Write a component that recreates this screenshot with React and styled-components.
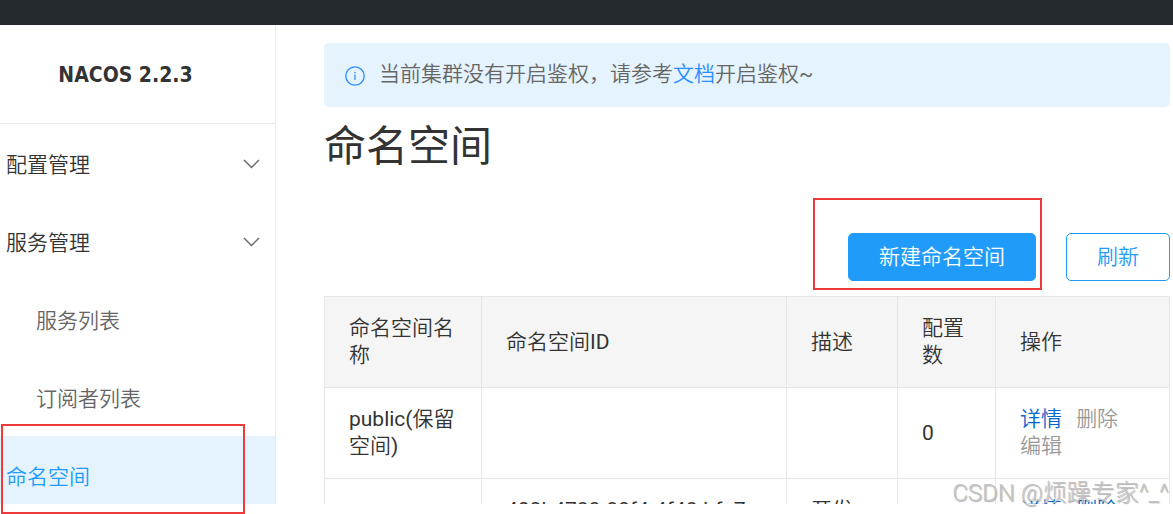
import React from "react";
import styled, { createGlobalStyle } from "styled-components";

const GlobalStyle = createGlobalStyle`
  * {
    box-sizing: border-box;
  }
  body {
    margin: 0;
    background: #fff;
    color: #333;
    font-family: Roboto, "Noto Sans CJK SC", sans-serif;
    font-size: 21px;
    font-weight: 350;
    line-height: 27px;
  }
`;

const Page = styled.div`
  position: relative;
  height: 100vh;
  padding-bottom: 10px;
  display: flex;
  flex-direction: column;
  overflow: hidden;
`;

const TopBar = styled.header`
  flex: none;
  height: 25px;
  background: #252a2f;
`;

const Body = styled.div`
  flex: 1;
  min-height: 0;
  display: flex;
  overflow: hidden;
`;

const Sidebar = styled.nav`
  flex: none;
  width: 276px;
  border-right: 1px solid #ebebeb;
`;

const Brand = styled.h1`
  margin: 0;
  padding: 36px 24px 34px 0;
  border-bottom: 1px solid #ebebeb;
  font-family: "DejaVu Sans Condensed", "DejaVu Sans", sans-serif;
  font-size: 21px;
  font-weight: 700;
  line-height: 28px;
  text-align: center;
`;

const Menu = styled.ul`
  margin: 0;
  padding: 0;
  list-style: none;
`;

const MenuItem = styled.a`
  display: flex;
  align-items: center;
  justify-content: space-between;
  height: 78px;
  padding: 4px 15px 0 ${(props) => (props.$sub ? "36px" : "6px")};
  background: ${(props) => (props.$active ? "#e4f3fe" : "transparent")};
  color: ${(props) =>
    props.$active ? "#209bfa" : props.$sub ? "#666" : "#333"};
  text-decoration: none;
`;

const Main = styled.main`
  flex: 1;
  min-width: 0;
  padding: 18px 3px 0 48px;
`;

const Notice = styled.div`
  display: flex;
  align-items: center;
  gap: 14px;
  padding: 17px 21px 19px;
  border-radius: 5px;
  background: #e4f3fe;
  color: #666;
  line-height: 28px;
`;

const NoticeIcon = styled.svg`
  flex: none;
  margin-top: 4px;
`;

const NoticeLink = styled.a`
  color: #298dff;
  text-decoration: none;
`;

const Title = styled.h2`
  margin: 8px 0 0;
  font-size: 42px;
  font-weight: 400;
  line-height: 64px;
`;

const Toolbar = styled.div`
  display: flex;
  justify-content: flex-end;
  gap: 30px;
  margin: 54px 0 15px;
`;

const Button = styled.button`
  height: 48px;
  padding: 0 30px;
  border: 1px solid #209bfa;
  border-radius: 5px;
  background: ${(props) => (props.$primary ? "#209bfa" : "#fff")};
  color: ${(props) => (props.$primary ? "#fff" : "#209bfa")};
  font: inherit;
`;

const Table = styled.table`
  width: 100%;
  table-layout: fixed;
  border-collapse: collapse;
`;

const Col = styled.col`
  width: ${(props) => props.$width};
`;

const HeadCell = styled.th`
  padding: 18px 24px;
  border: 1px solid #e6e6e6;
  background: #f5f5f5;
  font-weight: inherit;
  text-align: left;
`;

const Cell = styled.td`
  padding: 18px 24px;
  border: 1px solid #e6e6e6;
  vertical-align: ${(props) => (props.$top ? "top" : "middle")};
`;

/* the CJK text is lighter than the Latin letters and digits beside it */
const Latin = styled.span`
  font-weight: 400;
`;

const Action = styled.a`
  margin-right: 9px;
  color: ${(props) => (props.$disabled ? "#999" : "#06c")};
  text-decoration: none;
`;

const Marker = styled.div`
  position: absolute;
  left: ${(props) => props.$left};
  right: ${(props) => props.$right};
  top: ${(props) => props.$top};
  width: ${(props) => props.$width};
  height: ${(props) => props.$height};
  border: 2px solid #ee3a3a;
  pointer-events: none;
`;

const Watermark = styled.div`
  position: absolute;
  right: 4px;
  bottom: 7px;
  color: #c4c4c4;
  font-size: 24px;
  font-weight: 300;
  text-shadow: 1px 1px 1px rgba(120, 120, 120, 0.6);
  pointer-events: none;
`;

function Chevron() {
  return (
    <svg width="17" height="12" viewBox="0 0 17 12" fill="none">
      <path d="M1 1L8.5 8.6L16 1" stroke="#666" strokeWidth="1.4" />
    </svg>
  );
}

function App() {
  return (
    <Page>
      <GlobalStyle />
      <TopBar />
      <Body>
        <Sidebar>
          <Brand>NACOS 2.2.3</Brand>
          <Menu>
            <li>
              <MenuItem href="#config">
                配置管理
                <Chevron />
              </MenuItem>
            </li>
            <li>
              <MenuItem href="#service">
                服务管理
                <Chevron />
              </MenuItem>
            </li>
            <li>
              <MenuItem href="#services" $sub>
                服务列表
              </MenuItem>
            </li>
            <li>
              <MenuItem href="#subscribers" $sub>
                订阅者列表
              </MenuItem>
            </li>
            <li>
              <MenuItem href="#namespace" $active>
                命名空间
              </MenuItem>
            </li>
          </Menu>
        </Sidebar>
        <Main>
          <Notice>
            <NoticeIcon width="20" height="20" viewBox="0 0 20 20" fill="none">
              <circle cx="10" cy="10" r="9.2" stroke="#298dff" strokeWidth="1.3" />
              <path d="M10 8.5V14" stroke="#298dff" strokeWidth="1.2" />
              <circle cx="10" cy="6.6" r="0.8" fill="#298dff" />
            </NoticeIcon>
            <span>
              当前集群没有开启鉴权，请参考
              <NoticeLink href="#docs">文档</NoticeLink>
              开启鉴权<Latin>~</Latin>
            </span>
          </Notice>
          <Title>命名空间</Title>
          <Toolbar>
            <Button $primary>新建命名空间</Button>
            <Button>刷新</Button>
          </Toolbar>
          <Table>
            <colgroup>
              <Col $width="157px" />
              <Col />
              <Col $width="111px" />
              <Col $width="98px" />
              <Col $width="174px" />
            </colgroup>
            <thead>
              <tr>
                <HeadCell>命名空间名称</HeadCell>
                <HeadCell>
                  命名空间<Latin>ID</Latin>
                </HeadCell>
                <HeadCell>描述</HeadCell>
                <HeadCell>配置数</HeadCell>
                <HeadCell>操作</HeadCell>
              </tr>
            </thead>
            <tbody>
              <tr>
                <Cell>
                  <Latin>public(</Latin>保留空间<Latin>)</Latin>
                </Cell>
                <Cell />
                <Cell />
                <Cell>
                  <Latin>0</Latin>
                </Cell>
                <Cell>
                  <Action href="#detail">详情</Action>{" "}
                  <Action $disabled>删除</Action>{" "}
                  <Action $disabled>编辑</Action>
                </Cell>
              </tr>
              <tr>
                <Cell />
                <Cell $top>
                  <Latin>408b4788-88f4-4f48-bfa7</Latin>
                </Cell>
                <Cell $top>开发</Cell>
                <Cell />
                <Cell $top>
                  <Action href="#detail">详情</Action>{" "}
                  <Action href="#delete">删除</Action>
                </Cell>
              </tr>
            </tbody>
          </Table>
        </Main>
      </Body>
      <Marker $left="1px" $top="424px" $width="244px" $height="90px" />
      <Marker $right="131px" $top="198px" $width="229px" $height="92px" />
      <Watermark>CSDN @烦躁专家^_^</Watermark>
    </Page>
  );
}

export default App;
